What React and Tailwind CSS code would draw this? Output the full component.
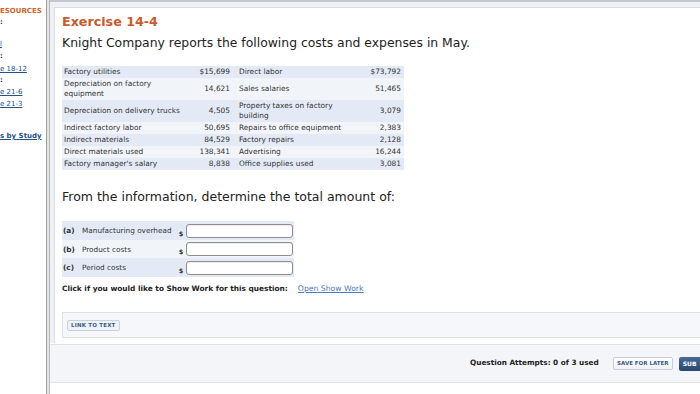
import React from "react";

const rows = [
  ["Factory utilities", "$15,699", "Direct labor", "$73,792"],
  ["Depreciation on factory equipment", "14,621", "Sales salaries", "51,465"],
  ["Depreciation on delivery trucks", "4,505", "Property taxes on factory building", "3,079"],
  ["Indirect factory labor", "50,695", "Repairs to office equipment", "2,383"],
  ["Indirect materials", "84,529", "Factory repairs", "2,128"],
  ["Direct materials used", "138,341", "Advertising", "16,244"],
  ["Factory manager's salary", "8,838", "Office supplies used", "3,081"],
];

const answers = [
  ["(a)", "Manufacturing overhead", "h-[19px]", "bg-[#e3eaf5]"],
  ["(b)", "Product costs", "h-[18px]", "bg-[#f1f5fa]"],
  ["(c)", "Period costs", "h-[19px]", "bg-[#e3eaf5]"],
];

function Sidebar() {
  const link = "text-[#24508a] underline";
  return (
    <aside className="w-[46px] shrink-0 overflow-hidden bg-white pt-[6px] text-[7px] leading-[11px] whitespace-nowrap">
      <div className="font-bold text-[#d2642a]">ESOURCES</div>
      <div className="text-[#333] font-bold">:</div>
      <div className={`mt-[11px] ${link}`}>l</div>
      <div className="mt-[1px] text-[#333] font-bold">:</div>
      <div className={`mt-[1.5px] ${link}`}>e 18-12</div>
      <div className="text-[#333] font-bold">:</div>
      <div className={`mt-[1px] ${link}`}>e 21-6</div>
      <div className={`mt-[1.5px] ${link}`}>e 21-3</div>
      <div className={`mt-[21px] font-bold ${link}`}>s by Study</div>
    </aside>
  );
}

function CostTable() {
  return (
    <div className="mt-[15px] w-[342px] grid grid-cols-[129px_42px_129px_42px] text-[7.4px] leading-[10px] text-[#333]">
      {rows.map((r, i) => {
        const bg = i % 2 === 0 ? "bg-[#e3eaf5]" : "bg-[#f1f5fa]";
        return (
          <React.Fragment key={i}>
            <div className={`${bg} pl-[2px] pr-[4px] py-[1px] flex items-center`}>{r[0]}</div>
            <div className={`${bg} pr-[3px] py-[1px] flex items-center justify-end`}>{r[1]}</div>
            <div className={`${bg} pl-[6px] pr-[8px] py-[1px] flex items-center`}>{r[2]}</div>
            <div className={`${bg} pr-[3px] py-[1px] flex items-center justify-end`}>{r[3]}</div>
          </React.Fragment>
        );
      })}
    </div>
  );
}

function AnswerTable() {
  return (
    <div className="mt-[16px] w-[232px] flex flex-col text-[7.3px] text-[#333]">
      {answers.map(([k, label, h, bg]) => (
        <div key={k} className={`${h} ${bg} flex`}>
          <div className="w-[114px] pl-[1px] flex items-center leading-[9px] whitespace-nowrap">
            <span className="w-[19px] font-bold">{k}</span>
            <span>{label}</span>
          </div>
          <div className="w-[10px] flex items-end justify-center pb-[1px] leading-[9px] font-bold text-[6.5px]">$</div>
          <div className="flex items-center">
            <div className="w-[107px] h-[14px] rounded-[3px] border border-[#8e8e8e] bg-white shadow-[inset_0_1px_1px_rgba(0,0,0,0.08)]" />
          </div>
        </div>
      ))}
    </div>
  );
}

export default function App() {
  return (
    <div className="w-[700px] h-[394px] overflow-hidden flex bg-white font-['DejaVu_Sans','Verdana',sans-serif]">
      <Sidebar />
      <div className="w-[4px] shrink-0 border-l border-r border-l-[#9c9c9c] border-r-[#b8b8b8] bg-[#e4e4e4]" />
      <main className="flex-1 min-w-0 flex flex-col">
        <div className="h-[2px] bg-[#c3c7cd]" />
        <div className="bg-[#eef2f7] pt-[5px] pl-[4px]">
          <div className="h-[336px] bg-white border-t border-l border-[#d8dde5] pl-[7px] pt-[6px] flex flex-col">
            <div className="text-[12.7px] leading-[16px] font-bold text-[#c95a2b]">Exercise 14-4</div>
            <div className="mt-[5px] text-[12.4px] leading-[16px] text-[#222] whitespace-nowrap">
              Knight Company reports the following costs and expenses in May.
            </div>
            <CostTable />
            <div className="mt-[19px] text-[12.5px] leading-[16px] text-[#222] whitespace-nowrap">
              From the information, determine the total amount of:
            </div>
            <AnswerTable />
            <div className="mt-[7px] text-[7.4px] leading-[10px] whitespace-nowrap flex">
              <span className="font-bold text-[#222]">Click if you would like to Show Work for this question:</span>
              <span className="ml-[10px] text-[7.7px] text-[#4a7ab8] underline">Open Show Work</span>
            </div>
            <div className="mt-[18px] h-[26px] bg-[#f5f7fa] border border-[#dde2e9] border-r-0 flex items-center pl-[4px]">
              <div className="h-[11px] px-[3px] rounded-[2px] border border-[#c9d1dc] bg-[#eef2f8] flex items-center text-[5.5px] font-bold text-[#3d5c88] tracking-[0.2px]">
                LINK TO TEXT
              </div>
            </div>
          </div>
        </div>
        <div className="mt-[1px] h-[39px] bg-[#f3f5f9] border-t border-b border-[#dfe3e9] flex items-center pl-[420px] whitespace-nowrap">
          <span className="text-[7.3px] font-bold text-[#222]">Question Attempts: 0 of 3 used</span>
          <div className="ml-[14px] h-[13px] w-[60px] shrink-0 rounded-[2px] border border-[#c6ceda] bg-gradient-to-b from-white to-[#eef1f6] flex items-center justify-center text-[5.5px] font-bold text-[#3d5c88]">
            SAVE FOR LATER
          </div>
          <div className="ml-[6px] h-[14px] w-[24px] shrink-0 rounded-l-[2px] bg-gradient-to-b from-[#4a6a95] to-[#2a4670] flex items-center pl-[4px] text-[6px] font-bold text-white">
            SUB
          </div>
        </div>
      </main>
    </div>
  );
}
